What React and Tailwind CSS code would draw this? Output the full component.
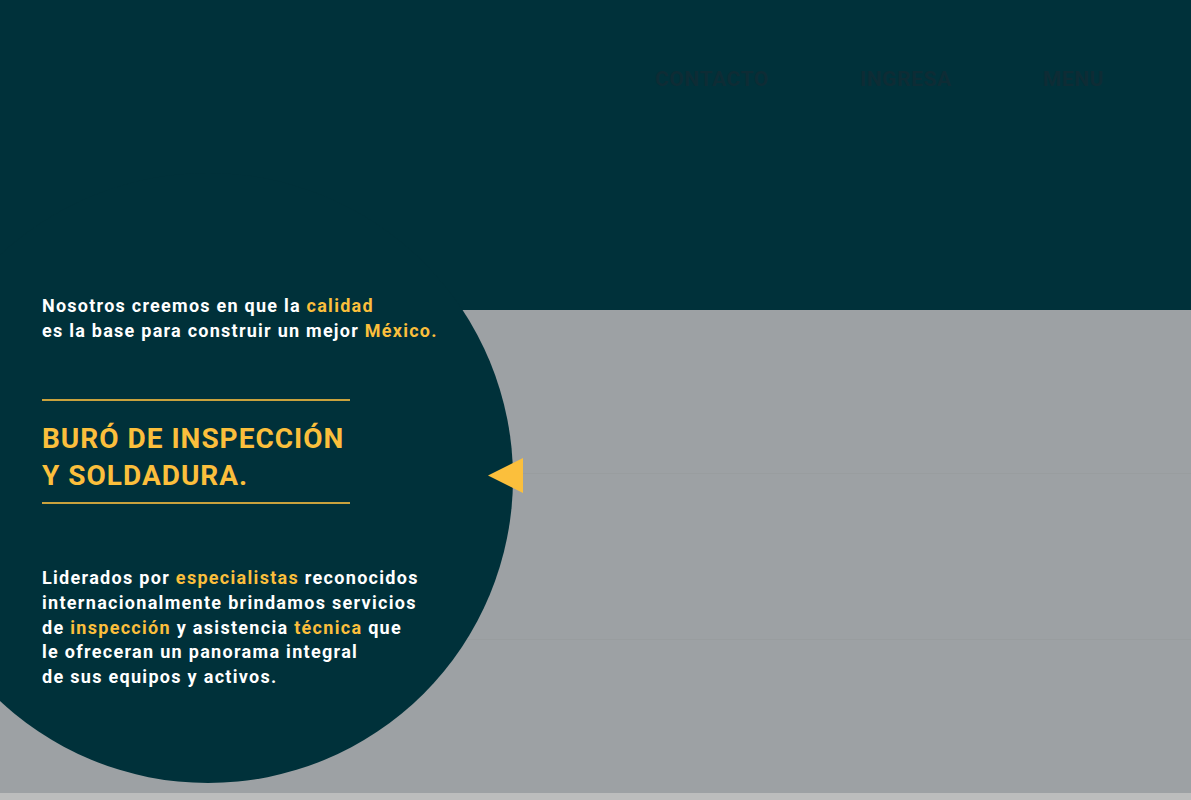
import React from 'react';

const navItems = ['CONTACTO', 'INGRESA', 'MENU'];

const Highlight = ({ children }) => <span className="text-[#fbbf3c]">{children}</span>;

const App = () => {
  return (
    <div className="relative w-full h-[800px] overflow-hidden bg-[#bcbdbd] font-['Roboto','Liberation_Sans',sans-serif]">
      {/* Top band with navigation */}
      <header className="h-[310px] bg-[#00313a] flex justify-end items-start pt-[64px] pr-[87px]">
        <nav className="flex items-center gap-[91px]">
          {navItems.map((item) => (
            <a key={item} href="#" className="text-[21px] font-bold tracking-[0.6px] text-[#0e2c35]">
              {item}
            </a>
          ))}
        </nav>
      </header>

      {/* Grey band */}
      <section className="h-[483px] bg-[#9da1a4] flex flex-col">
        <div className="h-[164px] border-b border-[#999d9f]" />
        <div className="h-[166px] border-b border-[#999d9f]" />
      </section>

      {/* Decorative circle */}
      <div className="absolute left-[-97px] top-[173px] w-[610px] h-[610px] rounded-full bg-[#00313a]" />

      {/* Yellow arrow */}
      <svg className="absolute left-[488px] top-[458px]" width="36" height="35" viewBox="0 0 36 35">
        <polygon points="0,17.5 35,0 35,35" fill="#fbbf3c" />
      </svg>

      {/* Text column over circle */}
      <div className="absolute left-[42px] top-[293px] flex flex-col text-white">
        <p className="text-[18px] font-bold leading-[25px] tracking-[1.25px]">
          Nosotros creemos en que la <Highlight>calidad</Highlight>
          <br />
          es la base para construir un mejor <Highlight>México.</Highlight>
        </p>

        <div className="mt-[56px] w-[308px] h-[2px] bg-[#c9a23d]" />
        <h1 className="mt-[19px] text-[28px] font-bold leading-[37px] tracking-[1px] text-[#fbbf3c]">
          BURÓ DE INSPECCIÓN
          <br />
          Y SOLDADURA.
        </h1>
        <div className="mt-[8px] w-[308px] h-[2px] bg-[#c9a23d]" />

        <p className="mt-[62px] text-[18px] font-bold leading-[24.75px] tracking-[1.3px]">
          Liderados por <Highlight>especialistas</Highlight> reconocidos
          <br />
          internacionalmente brindamos servicios
          <br />
          de <Highlight>inspección</Highlight> y asistencia <Highlight>técnica</Highlight> que
          <br />
          le ofreceran un panorama integral
          <br />
          de sus equipos y activos.
        </p>
      </div>
    </div>
  );
};

export default App;
